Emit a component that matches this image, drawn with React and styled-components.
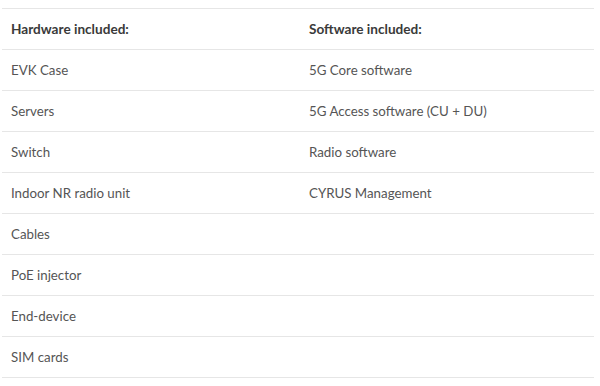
import React from 'react'
import styled, { createGlobalStyle } from 'styled-components'

const Global = createGlobalStyle`
  body {
    margin: 0;
    background: #fff;
    font-family: Lato, "Open Sans", sans-serif;
  }
`

const rows = [
  ['EVK Case', '5G Core software'],
  ['Servers', '5G Access software (CU + DU)'],
  ['Switch', 'Radio software'],
  ['Indoor NR radio unit', 'CYRUS Management'],
  ['Cables', ''],
  ['PoE injector', ''],
  ['End-device', ''],
  ['SIM cards', ''],
]

const App = () => {
  return (
    <Wrap>
      <Global />
      <Table>
        <Row>
          <Cell head>Hardware included:</Cell>
          <Cell head>Software included:</Cell>
        </Row>
        {rows.map(([hw, sw], i) => (
          <Row key={i}>
            <Cell>{hw}</Cell>
            <Cell>{sw}</Cell>
          </Row>
        ))}
      </Table>
    </Wrap>
  )
}

const Wrap = styled.div`
  padding: 8px 6px 0 2px;
`

const Table = styled.div`
  border-top: 1px solid #e6e6e6;
`

const Row = styled.div`
  display: grid;
  grid-template-columns: 298px 1fr;
  height: 40px;
  border-bottom: 1px solid #e6e6e6;
`

const Cell = styled.div`
  display: flex;
  align-items: center;
  padding-left: 9px;
  font-size: ${p => (p.head ? '13.6px' : '13.3px')};
  font-weight: ${p => (p.head ? 700 : 400)};
  color: ${p => (p.head ? '#3a3a3a' : '#555')};
`

export default App
